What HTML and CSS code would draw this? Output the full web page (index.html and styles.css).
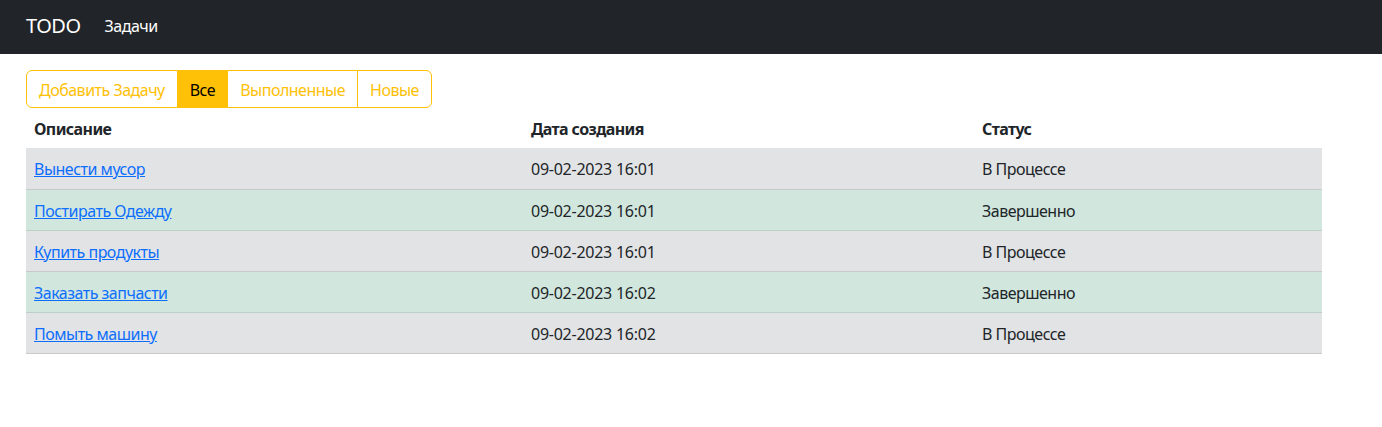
FILE: index.html
```html
<!DOCTYPE html>
<html lang="ru">
<head>
<meta charset="utf-8">
<title>TODO</title>
<link rel="stylesheet" href="styles.css">
</head>
<body>
<nav class="navbar">
  <a class="brand" href="#">TODO</a>
  <a class="nav-link" href="#">Задачи</a>
</nav>
<main class="main">
  <div class="btn-group">
    <a class="btn" href="#">Добавить Задачу</a>
    <a class="btn active" href="#">Все</a>
    <a class="btn" href="#">Выполненные</a>
    <a class="btn" href="#">Новые</a>
  </div>
  <table class="table">
    <colgroup>
      <col class="c1"><col class="c2"><col class="c3">
    </colgroup>
    <thead>
      <tr><th>Описание</th><th>Дата создания</th><th>Статус</th></tr>
    </thead>
    <tbody>
      <tr class="row-secondary"><td><a href="#">Вынести мусор</a></td><td class="date">09-02-2023 16:01</td><td>В Процессе</td></tr>
      <tr class="row-success"><td><a href="#">Постирать Одежду</a></td><td class="date">09-02-2023 16:01</td><td>Завершенно</td></tr>
      <tr class="row-secondary"><td><a href="#">Купить продукты</a></td><td class="date">09-02-2023 16:01</td><td>В Процессе</td></tr>
      <tr class="row-success"><td><a href="#">Заказать запчасти</a></td><td class="date">09-02-2023 16:02</td><td>Завершенно</td></tr>
      <tr class="row-secondary"><td><a href="#">Помыть машину</a></td><td class="date">09-02-2023 16:02</td><td>В Процессе</td></tr>
    </tbody>
  </table>
</main>
</body>
</html>
```
FILE: styles.css
```css
* { box-sizing: border-box; }
html, body { margin: 0; }
body {
  font-family: "Noto Sans", "Open Sans", sans-serif;
  font-size: 16px;
  line-height: 24px;
  letter-spacing: -0.5px;
  color: #212529;
  background: #fff;
}
.navbar {
  background: #212529;
  height: 54px;
  display: flex;
  align-items: center;
  padding: 0 26px 2px;
}
.brand {
  color: #fff;
  font-size: 20px;
  line-height: 30px;
  text-decoration: none;
  margin-right: 16px;
}
.nav-link {
  color: #fff;
  text-decoration: none;
  padding: 0 8px;
}
.main {
  padding: 16px 26px 0;
}
.btn-group {
  display: inline-flex;
}
.btn {
  display: block;
  padding: 7px 12px 5px;
  line-height: 24px;
  border: 1px solid #ffc107;
  color: #ffc107;
  text-decoration: none;
  margin-left: -1px;
}
.btn:first-child { margin-left: 0; border-radius: 6px 0 0 6px; }
.btn:last-child { border-radius: 0 6px 6px 0; }
.btn.active { background: #ffc107; color: #000; }
.table {
  width: 1296px;
  border-collapse: collapse;
}
.c1 { width: 497px; }
.c2 { width: 451px; }
.c3 { width: 348px; }
.table th {
  text-align: left;
  font-weight: 700;
  letter-spacing: -0.6px;
  padding: 9px 8px 7px;
  height: 40px;
}
.table td {
  padding: 9px 8px 7px;
  height: 41px;
}
.table td.date { letter-spacing: -0.25px; }
.row-secondary td { background: #e2e3e5; border-bottom: 1px solid #c8c9cb; }
.row-success td { background: #d1e7dd; border-bottom: 1px solid #bcd0c7; }
.table a { color: #0d6efd; }
```
